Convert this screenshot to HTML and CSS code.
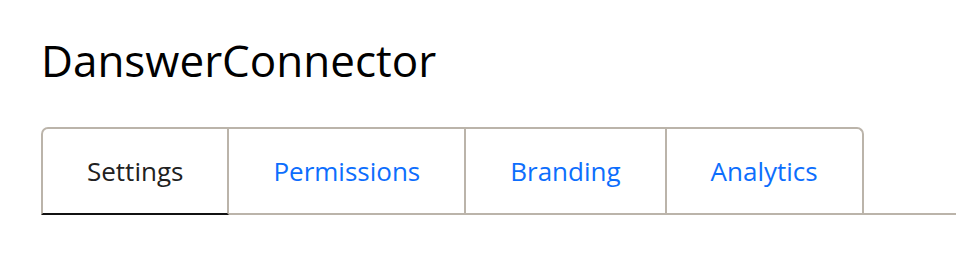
FILE: index.html
```html
<!DOCTYPE html>
<html>
<head>
<meta charset="utf-8">
<link rel="stylesheet" href="styles.css">
</head>
<body>
<div class="page">
  <h1 class="title">DanswerConnector</h1>
  <ul class="tabs">
    <li class="tab active">Settings</li>
    <li class="tab">Permissions</li>
    <li class="tab">Branding</li>
    <li class="tab">Analytics</li>
  </ul>
</div>
</body>
</html>
```
FILE: styles.css
```css
html, body {
  margin: 0;
  padding: 0;
  background: #fff;
}
.page {
  padding: 30px 0 0 41px;
  font-family: "Open Sans", "Noto Sans", sans-serif;
}
.title {
  margin: 0;
  font-size: 44px;
  font-weight: 400;
  line-height: 60px;
  color: #000;
}
.tabs {
  list-style: none;
  margin: 37px 0 0 0;
  padding: 0;
  display: flex;
  border-bottom: 2px solid #bbb4aa;
}
.tab {
  padding: 0 44px;
  height: 84px;
  display: flex;
  align-items: center;
  font-size: 26px;
  color: #0d6efd;
  border-top: 2px solid #bbb4aa;
  border-right: 2px solid #bbb4aa;
  border-bottom: 2px solid transparent;
  margin-bottom: -2px;
}
.tab:first-child {
  border-left: 2px solid #bbb4aa;
  border-top-left-radius: 7px;
}
.tab:last-child {
  border-top-right-radius: 7px;
}
.tab.active {
  color: #212121;
  border-bottom-color: #111;
}
```
